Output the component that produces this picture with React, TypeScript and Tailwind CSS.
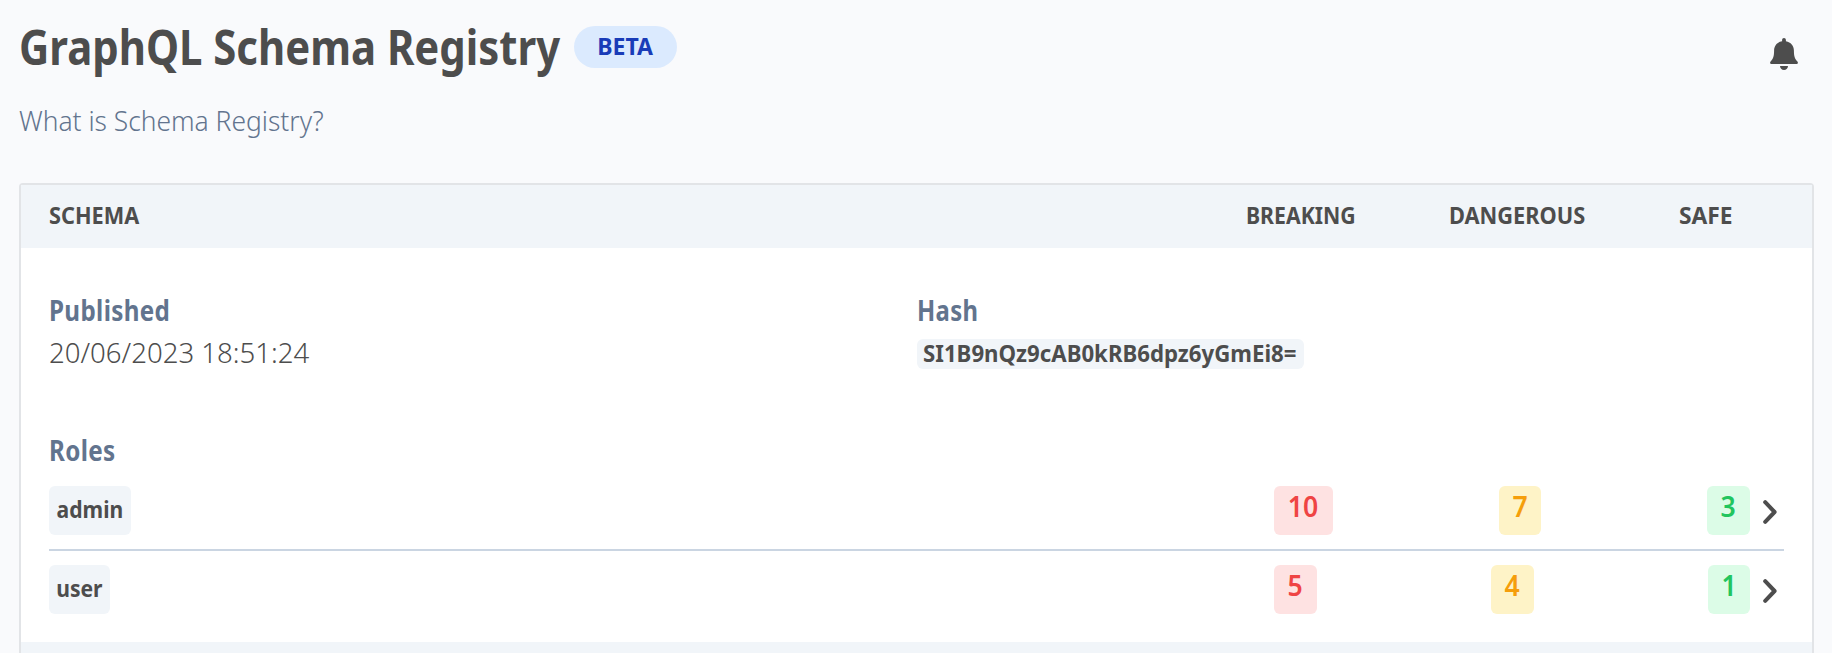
import type { ReactNode } from "react";

function Bell() {
  return (
    <svg viewBox="0 0 28 32" className="h-8 w-7 fill-[#4d4d4d]" aria-hidden="true">
      <path d="M14 0c1.1 0 1.9.8 1.9 1.9v1.3c4.9.8 8 4.7 8 9.3 0 6 1 8.500 3.500 11 1 1.100.400 2.500-1.100 2.500H1.700C.2 26-.4 24.600.6 23.500 3.100 21 4.100 18.500 4.100 12.500c0-4.600 3.100-8.500 8-9.300V1.900C12.100.8 12.900 0 14 0z" />
      <path d="M10 28h8c0 2.300-1.700 4-4 4s-4-1.700-4-4z" />
    </svg>
  );
}

function Chevron() {
  return (
    <svg viewBox="0 0 14 24" className="ml-[13px] h-6 w-3.5 shrink-0" fill="none" stroke="#4d4d4d" strokeWidth="4" strokeLinecap="round" strokeLinejoin="round" aria-hidden="true">
      <path d="M2.200 2.200 11.600 12 2.200 21.800" />
    </svg>
  );
}

function Badge({ className, children }: { className: string; children: ReactNode }) {
  return (
    <span className={`flex h-[49px] items-start justify-center rounded-md text-[28px] leading-[40px] font-semibold ${className}`}>
      <span className="inline-block scale-x-[0.95]">{children}</span>
    </span>
  );
}

function Label({ className, children }: { className: string; children: ReactNode }) {
  return (
    <div className="text-[28px] leading-[43px] font-bold text-slate-500">
      <span className={`relative top-px inline-block origin-left tracking-[0.4px] ${className}`}>{children}</span>
    </div>
  );
}

function RoleChip({ className, children }: { className: string; children: ReactNode }) {
  return (
    <span className={`flex h-[49px] justify-center rounded-md bg-slate-100 text-[24px] leading-[45px] font-bold ${className}`}>
      <span className="inline-block scale-x-[0.88]">{children}</span>
    </span>
  );
}

export default function App() {
  return (
    <div className="flex h-[653px] flex-col overflow-hidden bg-[#f9fafc] px-[19px] pt-[21px] font-['Noto_Sans',sans-serif] whitespace-nowrap text-[#4d4d4d]">
      <header className="flex h-[49px] items-start">
        <h1 className="w-[555px] text-[48px] leading-[51px] font-bold">
          <span className="inline-block origin-left scale-x-[0.872]">GraphQL Schema Registry</span>
        </h1>
        <span className="mt-[5px] flex h-[42px] w-[103px] justify-center rounded-full bg-blue-100 text-[24px] leading-[39px] font-bold text-blue-800">
          <span className="inline-block scale-x-[0.96]">BETA</span>
        </span>
        <div className="mt-[17px] mr-[15px] ml-auto">
          <Bell />
        </div>
      </header>
      <p className="mt-[29px] text-[28px] leading-[43px] font-light text-slate-500">
        <span className="inline-block origin-left scale-x-[0.942]">What is Schema Registry?</span>
      </p>

      <section className="mt-[41px] w-[1795px] flex-1 rounded-t-[4px] border-2 border-b-0 border-[#e2e4e7] bg-white">
        <div className="flex h-[63px] bg-slate-100 pl-7 text-[24px] leading-[60px] font-bold">
          <div className="w-[1197px]"><span className="inline-block origin-left scale-x-[0.905]">SCHEMA</span></div>
          <div className="w-[203px]"><span className="inline-block origin-left scale-x-[0.885]">BREAKING</span></div>
          <div className="w-[230px]"><span className="inline-block origin-left scale-x-[0.908]">DANGEROUS</span></div>
          <div><span className="inline-block origin-left scale-x-[0.95]">SAFE</span></div>
        </div>

        <div className="flex px-7 pt-10">
          <div className="w-[868px]">
            <Label className="scale-x-[0.864]">Published</Label>
            <div className="text-[28px] leading-[42px] font-light">
              <span className="inline-block origin-left scale-x-[0.985]">20/06/2023 18:51:24</span>
            </div>
          </div>
          <div>
            <Label className="scale-x-[0.852]">Hash</Label>
            <div className="mt-2 h-[30px] w-[387px] rounded-md bg-slate-100 pl-[6px] text-[24px] leading-[27px] font-bold">
              <span className="inline-block origin-left scale-x-[0.926]">SI1B9nQz9cAB0kRB6dpz6yGmEi8=</span>
            </div>
          </div>
        </div>

        <div className="px-7 pt-[55px]">
          <Label className="scale-x-[0.865]">Roles</Label>
          <div className="mt-[15px] flex h-[65px] items-start border-b-2 border-slate-300">
            <div className="w-[1225px]"><RoleChip className="w-[82px]">admin</RoleChip></div>
            <Badge className="w-[59px] bg-[#fee2e2] pr-px text-[#ef4444]">10</Badge>
            <Badge className="ml-[166px] w-[42px] bg-[#fef3c7] text-[#f59e0b]">7</Badge>
            <Badge className="ml-[166px] w-[43px] bg-[#dcfce7] text-[#22c55e]">3</Badge>
            <div className="mt-3.5"><Chevron /></div>
          </div>
          <div className="mt-3.5 flex h-[63px] items-start">
            <div className="w-[1225px]"><RoleChip className="w-[61px]">user</RoleChip></div>
            <Badge className="w-[43px] bg-[#fee2e2] text-[#ef4444]">5</Badge>
            <Badge className="ml-[174px] w-[43px] bg-[#fef3c7] pr-px text-[#f59e0b]">4</Badge>
            <Badge className="ml-[174px] w-[42px] bg-[#dcfce7] text-[#22c55e]">1</Badge>
            <div className="mt-3.5"><Chevron /></div>
          </div>
        </div>
        <div className="mt-3.5 h-16 bg-slate-100" />
      </section>
    </div>
  );
}
